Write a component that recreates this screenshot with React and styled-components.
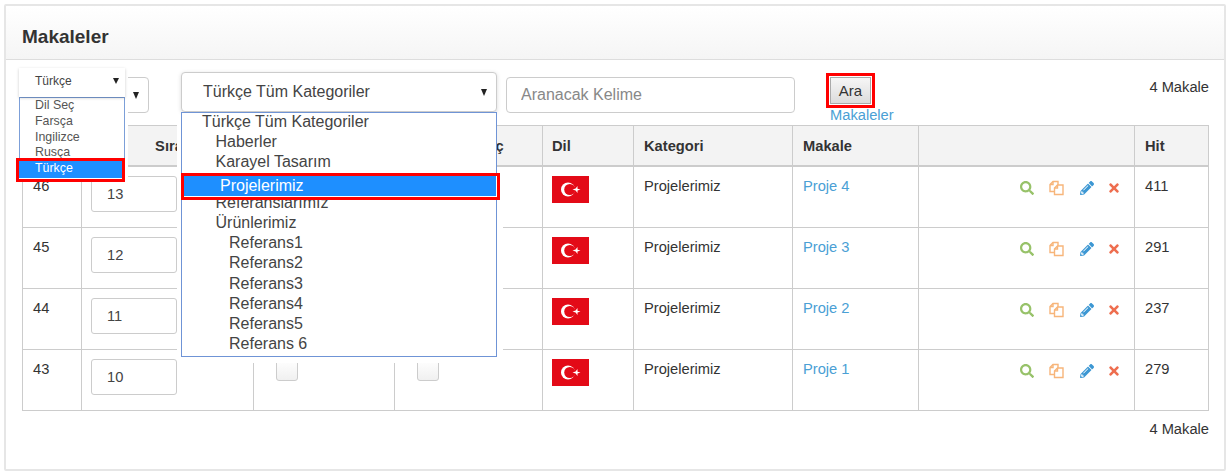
import React from "react";
import styled, { createGlobalStyle } from "styled-components";
import { FaSearch, FaPencilAlt, FaTimes } from "react-icons/fa";

const GlobalStyle = createGlobalStyle`
  html, body {
    margin: 0;
    background: #fff;
    font-family: "Liberation Sans", Arial, sans-serif;
    font-size: 14.7px;
    color: #333;
  }
`;

const languages = ["Dil Seç", "Farsça", "Ingilizce", "Rusça", "Türkçe"];

const categories = [
  { label: "Türkçe Tüm Kategoriler", level: 0 },
  { label: "Haberler", level: 1 },
  { label: "Karayel Tasarım", level: 1 },
  { label: "Projelerimiz", level: 1, active: true },
  { label: "Referanslarımız", level: 1 },
  { label: "Ürünlerimiz", level: 1 },
  { label: "Referans1", level: 2 },
  { label: "Referans2", level: 2 },
  { label: "Referans3", level: 2 },
  { label: "Referans4", level: 2 },
  { label: "Referans5", level: 2 },
  { label: "Referans 6", level: 2 },
];

const rows = [
  { id: 46, order: 13, name: "Proje 4", hit: 411 },
  { id: 45, order: 12, name: "Proje 3", hit: 291 },
  { id: 44, order: 11, name: "Proje 2", hit: 237 },
  { id: 43, order: 10, name: "Proje 1", hit: 279 },
];

function Flag() {
  return (
    <FlagSvg viewBox="0 0 37 27">
      <rect width="37" height="27" fill="#e30a17" />
      <circle cx="16" cy="13.5" r="7" fill="#fff" />
      <circle cx="17.8" cy="13.5" r="5.6" fill="#e30a17" />
      <polygon
        fill="#fff"
        points="20.5,13.5 23.6,12.5 25.5,10 25.5,12.7 28.5,13.5 25.5,14.4 25.5,17 23.6,14.5"
      />
    </FlagSvg>
  );
}

// the old fa-files-o: two sheets with a cut corner
function FilesIcon() {
  return (
    <svg width="15" height="16" viewBox="0 0 15 16" fill="none" stroke="#f7b57a" strokeWidth="1.4">
      <path d="M5.5 11.5H1V4.5L4 1.5H9V5" />
      <path d="M4 1.5V4.5H1" />
      <path d="M5.5 14.5V8L8.5 5H14V14.5Z" />
      <path d="M8.5 5V8H5.5" />
    </svg>
  );
}

export default function App() {
  return (
    <>
      <GlobalStyle />
      <Panel>
        <PanelHeader>Makaleler</PanelHeader>
        <PanelBody>
          <Toolbar>
            <LangSelect>
              <Arrow />
              <LangDrop>
                <LangButton>
                  Türkçe
                  <Arrow />
                </LangButton>
                <LangList>
                  {languages.map((l) => (
                    <LangItem key={l} $active={l === "Türkçe"}>
                      {l}
                    </LangItem>
                  ))}
                </LangList>
              </LangDrop>
            </LangSelect>
            <CatSelect>
              Türkçe Tüm Kategoriler
              <Arrow />
              <CatList>
                {categories.map((c) => (
                  <CatItem key={c.label} $level={c.level} $active={c.active}>
                    {c.label}
                  </CatItem>
                ))}
              </CatList>
            </CatSelect>
            <SearchInput placeholder="Aranacak Kelime" />
            <SearchGroup>
              <SearchButton>Ara</SearchButton>
              <Link>Makaleler</Link>
            </SearchGroup>
            <Count>4 Makale</Count>
          </Toolbar>
          <Table>
            <colgroup>
              <col width="59" />
              <col width="172" />
              <col width="141" />
              <col width="148" />
              <col width="91" />
              <col width="159" />
              <col width="126" />
              <col width="216" />
              <col width="74" />
            </colgroup>
            <thead>
              <tr>
                <Th />
                <Th $center>Sıra</Th>
                <Th $center>Aktif</Th>
                <Th $center>Vitrin Seç</Th>
                <Th $tight>Dil</Th>
                <Th>Kategori</Th>
                <Th>Makale</Th>
                <Th />
                <Th>Hit</Th>
              </tr>
            </thead>
            <tbody>
              {rows.map((r) => (
                <tr key={r.id}>
                  <Td>{r.id}</Td>
                  <Td $tight>
                    <OrderInput defaultValue={r.order} />
                  </Td>
                  <Td $tight>
                    <Check />
                  </Td>
                  <Td $tight>
                    <Check />
                  </Td>
                  <Td $tight>
                    <Flag />
                  </Td>
                  <Td>Projelerimiz</Td>
                  <Td>
                    <Link>{r.name}</Link>
                  </Td>
                  <Td>
                    <Actions>
                      <FaSearch color="#97c269" size={14} />
                      <FilesIcon />
                      <FaPencilAlt color="#3c97d3" size={14} />
                      <FaTimes color="#ee6e4f" size={14} />
                    </Actions>
                  </Td>
                  <Td>{r.hit}</Td>
                </tr>
              ))}
            </tbody>
          </Table>
          <Footer>4 Makale</Footer>
        </PanelBody>
      </Panel>
    </>
  );
}

const Panel = styled.section`
  box-sizing: border-box;
  width: 1222px;
  height: 467px;
  margin: 4px 0 0 4px;
  border: 2px solid #e6e6e6;
  border-radius: 2px;
`;
const PanelHeader = styled.header`
  box-sizing: border-box;
  height: 54px;
  padding: 20px 16px 0;
  font-size: 19px;
  font-weight: 700;
  line-height: 22px;
  color: #333;
  background: linear-gradient(to bottom, #fff, #f5f5f5);
  border-bottom: 1px solid #ddd;
`;
const PanelBody = styled.div`
  padding: 0 15px 0 16px;
`;
const Toolbar = styled.div`
  display: flex;
  align-items: flex-start;
  height: 65px;
`;
const Arrow = styled.i`
  position: absolute;
  right: 9px;
  top: 50%;
  margin-top: -3px;
  width: 0;
  height: 0;
  border-left: 3.5px solid transparent;
  border-right: 3.5px solid transparent;
  border-top: 7px solid #222;
`;
const LangSelect = styled.div`
  position: relative;
  box-sizing: border-box;
  flex: none;
  width: 130px;
  height: 36px;
  margin: 17px 0 0 -3px;
  border: 1px solid #ccc;
  border-radius: 4px;
  background: #fff;
`;
const LangDrop = styled.div`
  position: absolute;
  z-index: 3;
  left: -1px;
  top: -10px;
  width: 106px;
  background: #fff;
  box-shadow: 3px 0 0 #fff;
`;
const LangButton = styled.div`
  position: relative;
  box-sizing: border-box;
  height: 29px;
  padding: 6px 0 0 16px;
  font-size: 12px;
  line-height: 15px;
  color: #444;
  background: #fff;
  box-shadow: 0 1px 3px rgba(0, 0, 0, 0.2);
  ${Arrow} {
    right: 6px;
    border-left-width: 3px;
    border-right-width: 3px;
    border-top-width: 6px;
    margin-top: -5px;
  }
`;
const LangList = styled.ul`
  box-sizing: border-box;
  height: 84px;
  margin: 0;
  padding: 0;
  list-style: none;
  border: 1px solid #7c9fd8;
  background: #fff;
`;
const LangItem = styled.li`
  box-sizing: border-box;
  height: 15.8px;
  padding-left: 15px;
  font-size: 12.4px;
  line-height: 14px;
  color: #555;
  ${(p) =>
    p.$active &&
    `
    position: relative;
    height: 17.5px;
    margin: 0 2px 0 -1px;
    padding-left: 16px;
    line-height: 15px;
    color: #fff;
    background: #1e8fff padding-box;
    border-bottom: 1px solid #fff;
    outline: 3px solid #f00;
  `}
`;
const CatSelect = styled.div`
  position: relative;
  box-sizing: border-box;
  flex: none;
  width: 316px;
  height: 40px;
  margin: 12px 0 0 32px;
  padding-left: 21px;
  font-size: 16px;
  line-height: 38px;
  color: #444;
  border: 1px solid #ccc;
  border-radius: 4px;
  background: #fff;
  box-shadow: 0 1px 4px rgba(0, 0, 0, 0.15);
`;
const CatList = styled.ul`
  position: absolute;
  z-index: 2;
  left: -1px;
  top: 39px;
  box-sizing: border-box;
  width: 316px;
  height: 245px;
  margin: 0;
  padding: 0;
  list-style: none;
  border: 1px solid #6f94d6;
  background: #fff;
  box-shadow: -4px 6px 0 #fff;
  &::after {
    content: "";
    position: absolute;
    right: -7px;
    top: 55px;
    bottom: -7px;
    width: 6px;
    background: #fff;
  }
`;
const CatItem = styled.li`
  height: 20.2px;
  padding-left: ${(p) => 20 + p.$level * 13.5}px;
  font-size: 16px;
  line-height: 18px;
  color: #444;
  ${(p) =>
    p.$active &&
    `
    position: relative;
    z-index: 1;
    box-sizing: border-box;
    height: 21px;
    padding-left: 36px;
    margin: 2px -1px -2.8px 2px;
    line-height: 19px;
    color: #fff;
    background: #1e8fff padding-box;
    border-bottom: 1px solid #fff;
    border-right: 1px solid #fff;
    outline: 3px solid #f00;
  `}
`;
const SearchInput = styled.input`
  box-sizing: border-box;
  flex: none;
  width: 289px;
  height: 36px;
  margin: 17px 0 0 9px;
  padding: 0 14px;
  font-family: inherit;
  font-size: 16px;
  color: #444;
  border: 1px solid #ccc;
  border-radius: 4px;
  &::placeholder {
    color: #888;
  }
`;
const SearchGroup = styled.div`
  flex: none;
  width: 66px;
  margin: 17px 0 0 35px;
`;
const SearchButton = styled.button`
  display: block;
  box-sizing: border-box;
  width: 41px;
  height: 27px;
  margin-bottom: 2px;
  padding: 0;
  font-family: inherit;
  font-size: 15px;
  color: #333;
  border: 1px solid #aaa;
  background: linear-gradient(to bottom, #f6f6f6, #dcdcdc);
  outline: 3px solid #f00;
  outline-offset: 1px;
`;
const Link = styled.a`
  font-size: 14.7px;
  line-height: 18px;
  color: #4aa0d5;
`;
const Count = styled.div`
  margin: 19px 0 0 auto;
  line-height: 16px;
`;
const Table = styled.table`
  width: 1186px;
  table-layout: fixed;
  border-collapse: collapse;
  color: #333;
`;
const Th = styled.th`
  height: 39px;
  padding: 0 ${(p) => (p.$tight ? 9 : 10)}px;
  font-weight: 700;
  text-align: ${(p) => (p.$center ? "center" : "left")};
  text-indent: ${(p) => (p.$center ? 3 : 0)}px;
  background: #f3f3f3;
  border: 1px solid #ccc;
  border-bottom-width: 2px;
`;
const Td = styled.td`
  height: 61px;
  box-sizing: border-box;
  padding: 9px ${(p) => (p.$tight ? 9 : 10)}px 0;
  vertical-align: top;
  line-height: 20px;
  border: 1px solid #ccc;
`;
const OrderInput = styled.input`
  display: block;
  box-sizing: border-box;
  width: 86px;
  height: 36px;
  padding: 0 15px;
  font-family: inherit;
  font-size: 14.7px;
  color: #444;
  border: 1px solid #ccc;
  border-radius: 3px;
`;
const Check = styled.span`
  display: block;
  box-sizing: border-box;
  width: 22px;
  height: 22px;
  margin-left: 13px;
  border: 1px solid #ccc;
  border-radius: 3px;
  background: linear-gradient(to bottom, #fff, #f0f0f0);
`;
const FlagSvg = styled.svg`
  display: block;
  width: 37px;
  height: 27px;
`;
const Actions = styled.div`
  display: flex;
  align-items: center;
  gap: 16px;
  justify-content: flex-end;
  height: 24px;
  padding-right: 3px;
  svg:first-child {
    margin-right: -1px;
  }
  svg:last-child {
    margin-left: -3px;
  }
`;
const Footer = styled.div`
  margin-top: 10px;
  line-height: 16px;
  text-align: right;
`;
